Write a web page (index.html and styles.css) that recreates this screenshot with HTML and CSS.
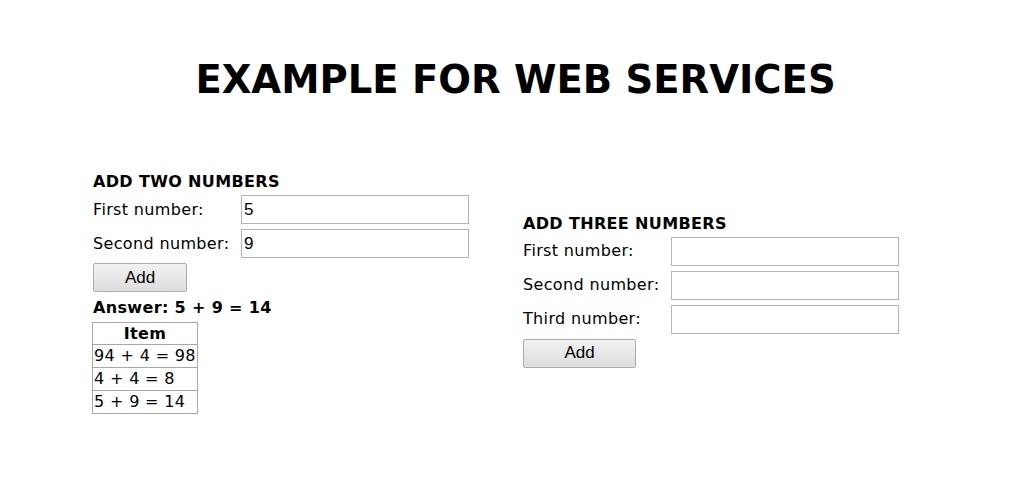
FILE: index.html
```html
<!DOCTYPE html>
<html>
<head>
<meta charset="utf-8">
<title>Example for web services</title>
<link rel="stylesheet" href="styles.css">
</head>
<body>
<h1 class="title">EXAMPLE FOR WEB SERVICES</h1>
<div class="forms">
  <section class="panel">
    <h2 class="panel-title">ADD TWO NUMBERS</h2>
    <div class="fields">
      <label class="label">First number:</label>
      <input class="field" type="text" value="5">
      <label class="label">Second number:</label>
      <input class="field" type="text" value="9">
    </div>
    <button class="btn btn-two" type="button">Add</button>
    <p class="answer">Answer: 5 + 9 = 14</p>
    <table class="history">
      <thead><tr><th>Item</th></tr></thead>
      <tbody>
        <tr><td>94 + 4 = 98</td></tr>
        <tr><td>4 + 4 = 8</td></tr>
        <tr><td>5 + 9 = 14</td></tr>
      </tbody>
    </table>
  </section>
  <section class="panel panel-three">
    <h2 class="panel-title">ADD THREE NUMBERS</h2>
    <div class="fields">
      <label class="label">First number:</label>
      <input class="field" type="text" value="">
      <label class="label">Second number:</label>
      <input class="field" type="text" value="">
      <label class="label">Third number:</label>
      <input class="field" type="text" value="">
    </div>
    <button class="btn btn-three" type="button">Add</button>
  </section>
</div>
</body>
</html>
```
FILE: styles.css
```css
html, body {
  margin: 0;
  padding: 0;
  background: #ffffff;
}

body {
  font-family: "DejaVu Sans", Verdana, sans-serif;
  font-size: 16px;
  letter-spacing: 0.35px;
  color: #000000;
}

.title {
  margin: 58px 0 0;
  padding-left: 7px;
  font-size: 38.5px;
  line-height: 44px;
  font-weight: bold;
  letter-spacing: 0;
  text-align: center;
}

.forms {
  display: flex;
  align-items: center;
  gap: 54px;
  padding-left: 93px;
  margin-top: 70px;
}

.panel {
  display: flex;
  flex-direction: column;
  align-items: flex-start;
  width: 376px;
}

.panel-three {
  margin-bottom: 5px;
}

.panel-title {
  margin: 0 0 3px;
  font-size: 16px;
  line-height: 20px;
  font-weight: bold;
}

.fields {
  display: grid;
  grid-template-columns: 148px 228px;
  row-gap: 5px;
  align-items: center;
}

.label {
  font-size: 16px;
  line-height: 20px;
}

.field {
  box-sizing: border-box;
  width: 228px;
  height: 29px;
  margin: 0;
  padding: 0 2px;
  border: 1px solid #b4b4b4;
  border-radius: 0;
  background: #ffffff;
  font-family: "Liberation Sans", Arial, sans-serif;
  font-size: 17px;
  letter-spacing: 0;
  color: #000000;
}

.btn {
  box-sizing: border-box;
  height: 29px;
  margin-top: 5px;
  padding: 0;
  border: 1px solid #acacac;
  border-radius: 2px;
  background: linear-gradient(#f2f2f2, #dddddd);
  font-family: "Liberation Sans", Arial, sans-serif;
  font-size: 17px;
  letter-spacing: 0;
  color: #000000;
}

.btn-two {
  width: 94px;
}

.btn-three {
  width: 113px;
}

.answer {
  margin: 6px 0 4px;
  font-size: 16px;
  line-height: 20px;
  font-weight: bold;
}

.history {
  border-collapse: collapse;
  margin-left: -1px;
}

.history th,
.history td {
  border: 1px solid #a8a8a8;
  padding: 0 1px;
  height: 22px;
  font-size: 16px;
  line-height: 20px;
  text-align: left;
  white-space: nowrap;
}

.history th {
  height: 21px;
  text-align: center;
  font-weight: bold;
}
```
